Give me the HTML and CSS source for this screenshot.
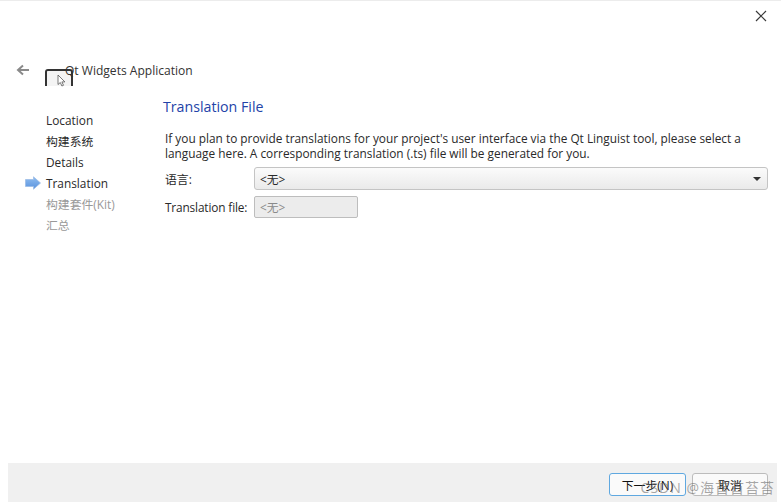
FILE: index.html
```html
<!DOCTYPE html>
<html lang="zh">
<head>
<meta charset="utf-8">
<title>Qt Widgets Application</title>
<link rel="stylesheet" href="styles.css">
</head>
<body>
<div class="window">
  <div class="topbar">
    <svg class="close" width="12" height="12" viewBox="0 0 12 12"><path d="M1 1L11 11M11 1L1 11" stroke="#3a3a3a" stroke-width="1.2" fill="none"/></svg>
  </div>
  <div class="header">
    <svg class="back" width="14" height="12" viewBox="0 0 14 12"><path d="M13 6H3M7 1.500L2 6l5 4.500" stroke="#8a8a8a" stroke-width="2" fill="none"/></svg>
    <div class="shot">
      <svg class="cursor" width="9" height="13" viewBox="0 0 9 13"><path d="M1 1v9.500l2.300-2 1.600 3.500 1.600-.7-1.600-3.400h3z" fill="#fff" stroke="#555" stroke-width=".8"/></svg>
    </div>
    <span class="app-title">Qt Widgets Application</span>
  </div>
  <div class="body">
    <nav class="steps">
      <div class="step">Location</div>
      <div class="step">构建系统</div>
      <div class="step">Details</div>
      <div class="step current">
        <svg class="marker" width="16" height="14" viewBox="0 0 16 14"><defs><linearGradient id="mk" x1="0" y1="0" x2="0" y2="1"><stop offset="0" stop-color="#8fbdf0"/><stop offset="1" stop-color="#5a93de"/></linearGradient></defs><path d="M0.500 3.500H8.500V0.800L15.500 7 8.500 13.200V10.500H0.500z" fill="url(#mk)" stroke="#9dbde6" stroke-width=".8"/></svg>
        Translation
      </div>
      <div class="step muted">构建套件(Kit)</div>
      <div class="step muted">汇总</div>
    </nav>
    <main class="content">
      <h1 class="page-title">Translation File</h1>
      <p class="intro">If you plan to provide translations for your project's user interface via the Qt Linguist tool, please select a language here. A corresponding translation (.ts) file will be generated for you.</p>
      <div class="form">
        <label class="form-label">语言:</label>
        <div class="combo"><span>&lt;无&gt;</span><i class="caret"></i></div>
        <label class="form-label narrow">Translation file:</label>
        <div class="field">&lt;无&gt;</div>
      </div>
    </main>
  </div>
  <footer class="footer">
    <button class="btn primary">下一步(N)</button>
    <button class="btn cancel">取消</button>
  </footer>
  <div class="watermark">CSDN @海首首苔苔</div>
</div>
</body>
</html>
```
FILE: styles.css
```css
* { box-sizing: border-box; }
html, body { margin: 0; padding: 0; background: #fff; }
body { font-family: "Open Sans", "Noto Sans CJK SC", sans-serif; font-size: 11.850px; color: #2a2a2a; overflow: hidden; }
.window { position: relative; width: 781px; height: 502px; display: flex; flex-direction: column; border-top: 1px solid #ececec; }
.topbar { height: 29px; flex: none; display: flex; justify-content: flex-end; align-items: flex-start; padding: 9px 14px 0 0; }
.header { height: 55px; flex: none; display: flex; align-items: flex-start; padding: 32px 0 0 16px; }
.back { flex: none; margin-top: 2px; }
.shot { width: 28px; height: 17px; margin: 7px 0 0 15px; flex: none; border: 2px solid #333; border-bottom: 0; border-radius: 3px 3px 0 0; background: #f4f4f4; padding: 3px 0 0 10px; }
.cursor { display: block; }
.app-title { margin-left: -8px; line-height: 17px; font-size: 12.050px; color: #333; }
.body { flex: 1; display: flex; min-height: 0; }
.steps { width: 163px; flex: none; padding: 25px 0 0 46px; }
.step { position: relative; height: 21.100px; line-height: 21px; }
.step.muted { color: #999; }
.marker { position: absolute; left: -21px; top: 3px; }
.content { flex: 1; min-width: 0; padding: 12px 13px 0 0; }
.page-title { margin: 0 0 14px; font-size: 14.200px; font-weight: 400; line-height: 20px; color: #2343a8; }
.intro { margin: 0 0 6px 2px; line-height: 15px; width: 590px; }
.form { display: grid; grid-template-columns: 89px 1fr; row-gap: 6px; margin-left: 2px; align-items: center; }
.form-label { line-height: 16px; white-space: nowrap; }
.form-label.narrow { letter-spacing: -.15px; }
.combo { height: 23px; border: 1px solid #c4c4c4; border-radius: 3px; background: linear-gradient(#fbfbfb, #eaeaea); display: flex; align-items: center; justify-content: space-between; padding: 0 6px 0 5px; }
.caret { width: 0; height: 0; border-left: 4px solid transparent; border-right: 4px solid transparent; border-top: 4px solid #333; }
.field { width: 104px; height: 22px; line-height: 20px; border: 1px solid #bdbdbd; border-radius: 2px; background: #ececec; color: #8a8a8a; padding-left: 5px; }
.footer { height: 39px; flex: none; margin: 0 4px 0 8px; background: #f0f0f0; display: flex; justify-content: flex-end; gap: 6px; padding: 10px 9px 0 0; }
.btn { height: 23px; padding: 0; border: 1px solid #bcbcbc; border-radius: 3px; background: #fafafa; font: inherit; color: #111; }
.btn.primary { width: 77px; border-color: #5fa8e0; }
.btn.cancel { width: 76px; }
.watermark { position: absolute; right: 6px; bottom: 5px; font-size: 14px; line-height: 18px; color: rgba(110,110,110,.6); letter-spacing: 1px; }
```
